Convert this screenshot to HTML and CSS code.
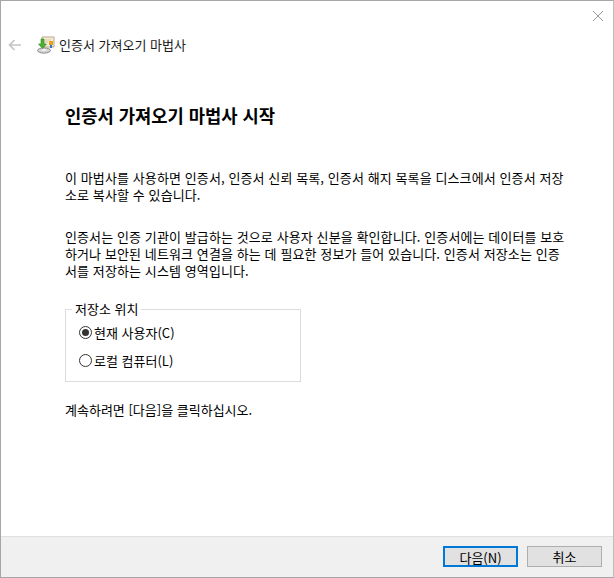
FILE: index.html
```html
<!DOCTYPE html>
<html lang="ko">
<head>
<meta charset="utf-8">
<title>인증서 가져오기 마법사</title>
<link rel="stylesheet" href="styles.css">
</head>
<body>
<div class="window">
  <div class="close-row">
    <svg class="close" width="10" height="10" viewBox="0 0 10 10"><path d="M0 0L10 10M10 0L0 10" stroke="#9a9a9a" stroke-width="1" fill="none"/></svg>
  </div>
  <header class="nav">
    <svg class="back" width="14" height="12" viewBox="0 0 14 12"><path d="M13 6H1.5M6.5 1L1.5 6L6.5 11" stroke="#c4c4c4" stroke-width="1.6" fill="none"/></svg>
    <svg class="wizard-icon" width="18" height="18" viewBox="0 0 18 18">
      <path d="M5 1H17V11H5Z" fill="#f5ecd6" stroke="#b8a888" stroke-width="1"/>
      <path d="M7 4H14M7 6H11" stroke="#d8c8a8" stroke-width="1"/>
      <rect x="12" y="5" width="4" height="4" fill="#e8a020"/>
      <rect x="13" y="9" width="2" height="3" fill="#3070d0"/>
      <ellipse cx="7" cy="14.5" rx="6.5" ry="2.6" fill="#d4d4d4" stroke="#8a8a8a" stroke-width="1"/>
      <ellipse cx="7" cy="14" rx="2.5" ry="1" fill="#f4f4f4"/>
      <path d="M7 3V8H9.5L5.5 12.5L1.5 8H4V3Z" fill="#4ab030" stroke="#2f8a20" stroke-width=".6"/>
    </svg>
    <span class="nav-title">인증서 가져오기 마법사</span>
  </header>
  <main class="content">
    <h1 class="heading">인증서 가져오기 마법사 시작</h1>
    <p class="para first"><span class="line">이 마법사를 사용하면 인증서, 인증서 신뢰 목록, 인증서 해지 목록을 디스크에서 인증서 저장</span><span class="line">소로 복사할 수 있습니다.</span></p>
    <p class="para second"><span class="line">인증서는 인증 기관이 발급하는 것으로 사용자 신분을 확인합니다. 인증서에는 데이터를 보호</span><span class="line">하거나 보안된 네트워크 연결을 하는 데 필요한 정보가 들어 있습니다. 인증서 저장소는 인증</span><span class="line">서를 저장하는 시스템 영역입니다.</span></p>
    <fieldset class="group">
      <legend class="legend">저장소 위치</legend>
      <label class="radio"><span class="dot checked"></span>현재 사용자(C)</label>
      <label class="radio"><span class="dot"></span>로컬 컴퓨터(L)</label>
    </fieldset>
    <p class="para cont">계속하려면 [다음]을 클릭하십시오.</p>
  </main>
  <footer class="footer">
    <button class="btn primary">다음(N)</button>
    <button class="btn">취소</button>
  </footer>
</div>
</body>
</html>
```
FILE: styles.css
```css
* { box-sizing: border-box; }
html, body { margin: 0; padding: 0; background: #fff; }
body { width: 614px; height: 578px; overflow: hidden; font-family: "Noto Sans CJK KR", "Noto Sans", sans-serif; font-size: 13px; color: #000; }
.window { width: 614px; height: 578px; display: flex; flex-direction: column; border: 1px solid #a6a6a6; border-right-color: #bdbdbd; background: #fff; }
.close-row { height: 29px; display: flex; justify-content: flex-end; padding: 10px 10px 0 0; }
.nav { height: 29px; display: flex; align-items: center; padding-left: 7px; }
.back { margin-right: 15px; }
.wizard-icon { margin-right: 4px; }
.nav-title { color: #1a1a1a; }
.content { flex: 1; padding-left: 64px; }
.heading { margin: 0; padding-top: 45px; font-size: 17.7px; line-height: 22px; font-weight: 700; color: #000; }
.para { margin: 0; line-height: 17px; letter-spacing: .1px; }
.line { display: block; white-space: nowrap; }
.first { margin-top: 43px; }
.second { margin-top: 25px; }
.group { margin: 23px 0 0; padding: 2px 0 0 13px; width: 236px; height: 80px; border: 1px solid #dcdcdc; }
.legend { padding: 0 3px; margin-left: -7px; line-height: 14px; }
.radio { display: flex; align-items: center; height: 28px; gap: 2px; }
.dot { width: 13px; height: 13px; border: 1px solid #333; border-radius: 50%; display: flex; align-items: center; justify-content: center; }
.dot.checked::after { content: ""; width: 7px; height: 7px; border-radius: 50%; background: #333; }
.cont { margin-top: 19px; letter-spacing: 0; }
.footer { height: 41px; background: #f0f0f0; border-top: 1px solid #dfdfdf; display: flex; justify-content: flex-end; gap: 9px; padding: 9px 11px 0 0; }
.btn { width: 75px; height: 21px; padding: 0; border: 1px solid #adadad; background: #e1e1e1; font: inherit; color: #000; }
.btn.primary { border: 2px solid #0078d7; }
```
